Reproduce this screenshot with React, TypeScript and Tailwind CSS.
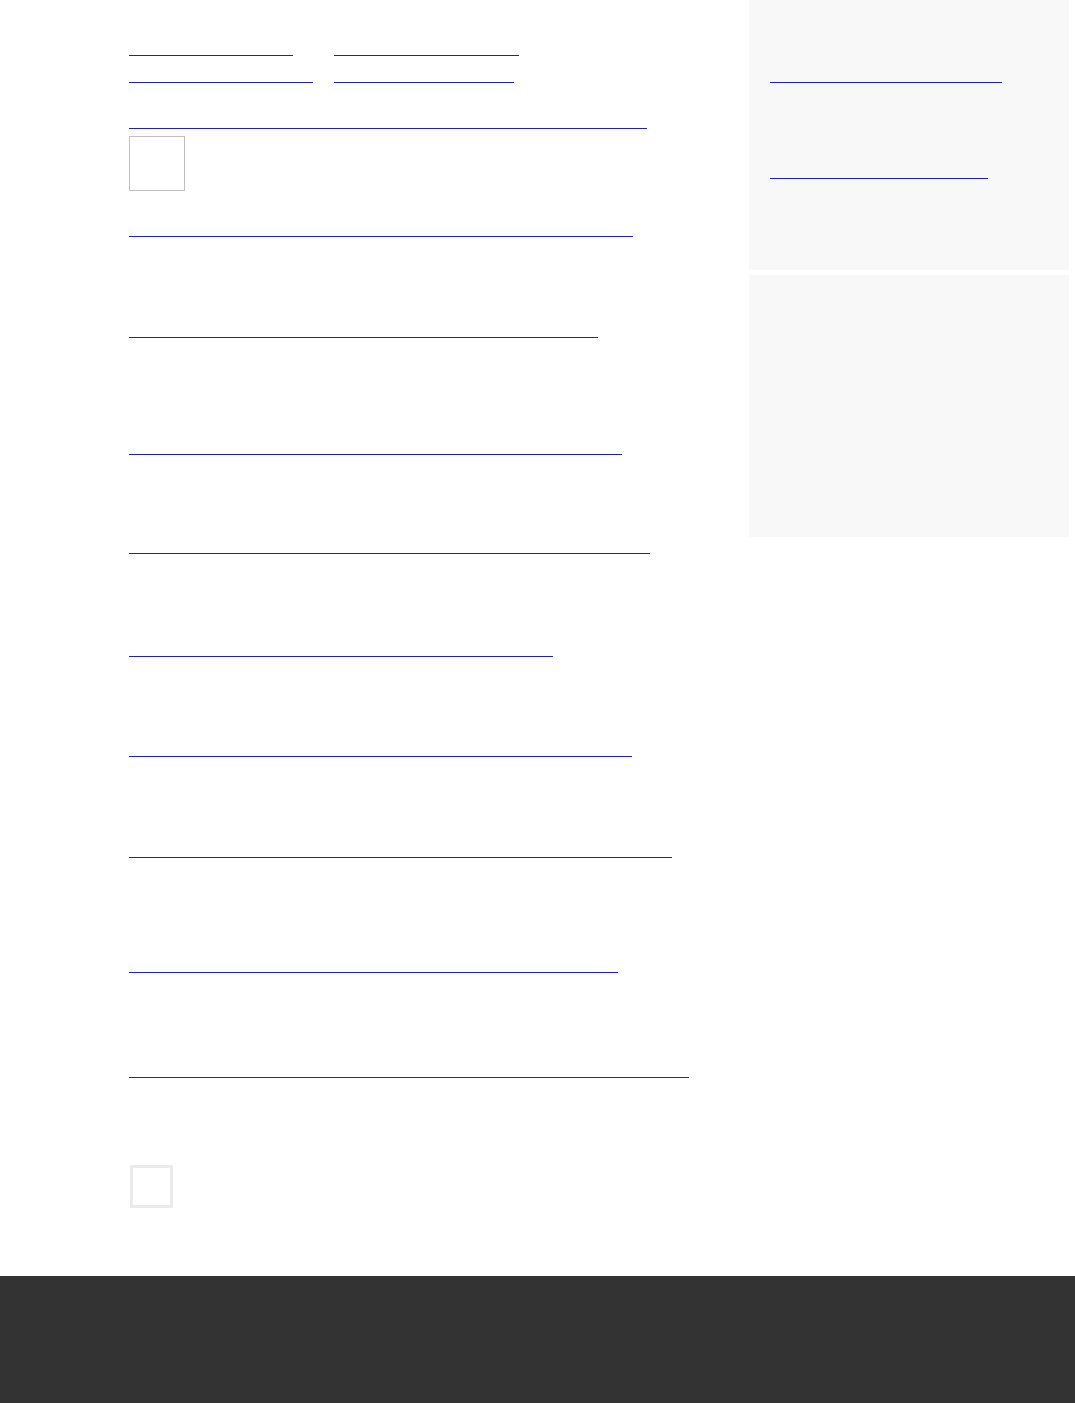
import React from "react";

// Links render with empty labels, so all that shows is the underline.
const Line = ({ className }: { className: string }) => (
  <a href="#" className={`block h-4 border-b border-[#1c1fd1] ${className}`} />
);

const App = () => {
  return (
    <div className="min-h-screen bg-white font-['Liberation_Sans',sans-serif]">
      <div className="flex items-start">
        {/* Main column */}
        <div className="flex-1 pl-[129px] pt-[40px] flex flex-col">
          <div className="flex gap-[41px]">
            <Line className="w-[164px]" />
            <Line className="w-[185px]" />
          </div>
          <div className="flex gap-[21px] mt-[11px]">
            <Line className="w-[184px]" />
            <Line className="w-[180px]" />
          </div>

          <Line className="w-[518px] mt-[30px]" />
          <div className="w-[56px] h-[55px] mt-[7px] border border-[#c0c0c0]" />

          <Line className="w-[504px] mt-[30px]" />
          <Line className="w-[469px] mt-[85px]" />
          <Line className="w-[493px] mt-[101px]" />
          <Line className="w-[521px] mt-[83px]" />
          <Line className="w-[424px] mt-[87px]" />
          <Line className="w-[503px] mt-[84px]" />
          <Line className="w-[543px] mt-[85px]" />
          <Line className="w-[489px] mt-[99px]" />
          <Line className="w-[560px] mt-[89px]" />

          <div className="w-[43px] h-[43px] ml-px mt-[87px] border-[3px] border-[#ebebeb]" />
          <div className="h-[68px]" />
        </div>

        {/* Sidebar */}
        <div className="w-[320px] mr-[6px] flex flex-col gap-[5px]">
          <div className="h-[270px] bg-[#f8f8f8] pl-[21px] pt-[67px] flex flex-col">
            <Line className="w-[232px]" />
            <Line className="w-[218px] mt-[80px]" />
          </div>
          <div className="h-[262px] bg-[#f8f8f8]" />
        </div>
      </div>

      {/* Footer */}
      <div className="h-[127px] bg-[#333333]" />
    </div>
  );
};

export default App;
